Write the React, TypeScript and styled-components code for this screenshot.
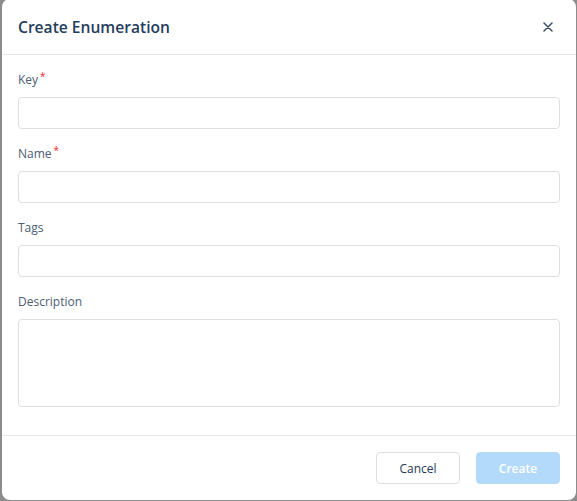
import styled, { createGlobalStyle } from "styled-components";

const GlobalStyle = createGlobalStyle`
  html, body {
    margin: 0;
    padding: 0;
    background: #8c8c8c;
    font-family: "Open Sans", "Noto Sans", sans-serif;
    overflow: hidden;
  }
`;

const Modal = styled.div`
  width: 574px;
  height: 501px;
  margin: -1px 1px 0 2px;
  background: #ffffff;
  border-radius: 8px;
  display: flex;
  flex-direction: column;
  box-sizing: border-box;
`;

const Header = styled.header`
  height: 56px;
  flex-shrink: 0;
  display: flex;
  align-items: center;
  justify-content: space-between;
  padding: 0 16px 0 16px;
  border-bottom: 1px solid #e6e8eb;
  box-sizing: border-box;
`;

const Title = styled.h2`
  margin: 0;
  font-size: 15.6px;
  font-weight: 600;
  color: #243d5c;
`;

const CloseButton = styled.button`
  width: 24px;
  height: 24px;
  border: none;
  background: none;
  padding: 0;
  display: flex;
  align-items: center;
  justify-content: center;
  color: #3c4d66;
  cursor: pointer;
`;

const Body = styled.div`
  flex: 1;
  padding: 16px 16px 0 16px;
  display: flex;
  flex-direction: column;
  gap: 16px;
`;

const Field = styled.div`
  display: flex;
  flex-direction: column;
  gap: 8px;
`;

const Label = styled.label`
  font-size: 12px;
  line-height: 18px;
  color: #4d5d75;
`;

const Required = styled.sup`
  color: #f5222d;
  font-size: 10px;
  margin-left: 2px;
  vertical-align: 4px;
  line-height: 0;
`;

const Input = styled.input`
  height: 32px;
  box-sizing: border-box;
  border: 1px solid #dcdfe3;
  border-radius: 4px;
  padding: 0 10px;
  font-family: inherit;
  font-size: 13px;
  outline: none;
`;

const TextArea = styled.textarea`
  height: 88px;
  box-sizing: border-box;
  border: 1px solid #dcdfe3;
  border-radius: 4px;
  padding: 6px 10px;
  font-family: inherit;
  font-size: 13px;
  resize: none;
  outline: none;
`;

const Footer = styled.footer`
  height: 65px;
  flex-shrink: 0;
  border-top: 1px solid #e6e8eb;
  display: flex;
  align-items: flex-start;
  justify-content: flex-end;
  gap: 16px;
  padding: 16px 16px 0 16px;
  box-sizing: border-box;
`;

const Button = styled.button<{ $primary?: boolean }>`
  width: 84px;
  height: 32px;
  border-radius: 4px;
  font-family: inherit;
  font-size: 12px;
  font-weight: ${(p) => (p.$primary ? 600 : 400)};
  border: 1px solid ${(p) => (p.$primary ? "#b3dafb" : "#dcdfe3")};
  background: ${(p) => (p.$primary ? "#b3dafb" : "#ffffff")};
  color: ${(p) => (p.$primary ? "#ffffff" : "#1f3656")};
  cursor: pointer;
`;

const fields = [
  { label: "Key", required: true },
  { label: "Name", required: true },
  { label: "Tags", required: false },
];

export default function App() {
  return (
    <>
      <GlobalStyle />
      <Modal>
        <Header>
          <Title>Create Enumeration</Title>
          <CloseButton aria-label="Close">
            <svg width="10" height="10" viewBox="0 0 10 10">
              <path d="M1 1L9 9M9 1L1 9" stroke="currentColor" strokeWidth="1.5" strokeLinecap="round" />
            </svg>
          </CloseButton>
        </Header>
        <Body>
          {fields.map((f) => (
            <Field key={f.label}>
              <Label>
                {f.label}
                {f.required && <Required>*</Required>}
              </Label>
              <Input />
            </Field>
          ))}
          <Field>
            <Label>Description</Label>
            <TextArea />
          </Field>
        </Body>
        <Footer>
          <Button>Cancel</Button>
          <Button $primary>Create</Button>
        </Footer>
      </Modal>
    </>
  );
}
